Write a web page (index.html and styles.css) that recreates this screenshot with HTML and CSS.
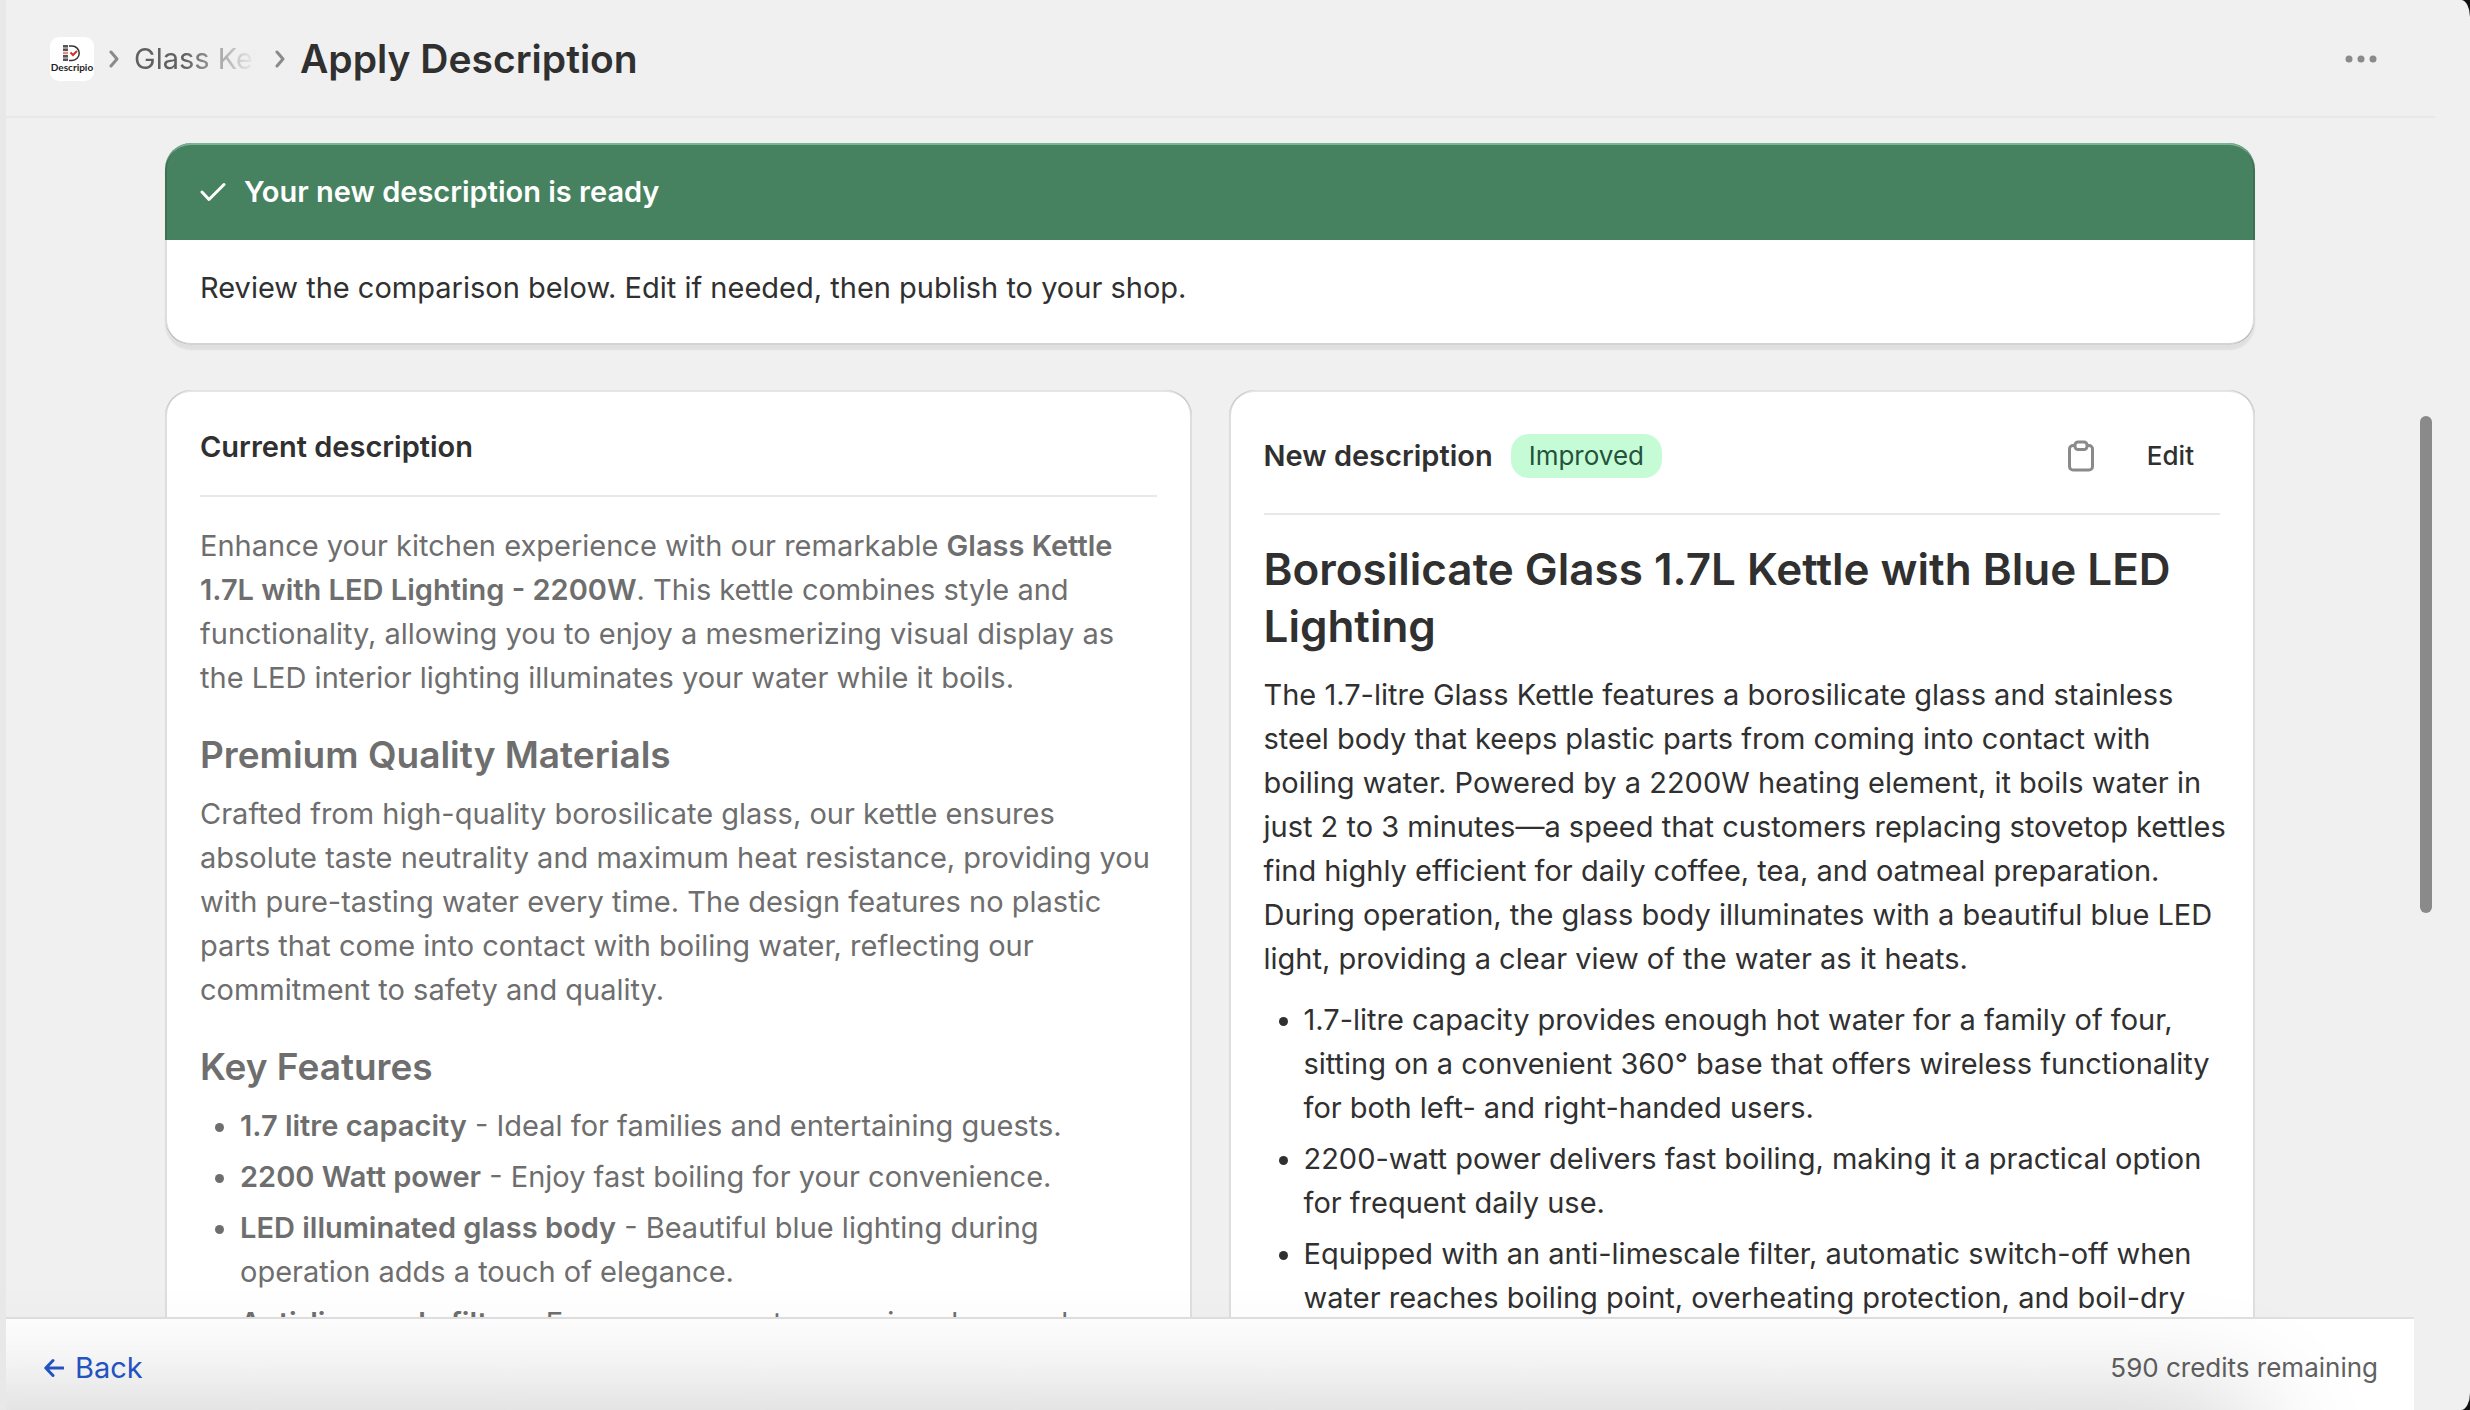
FILE: index.html
```html
<!DOCTYPE html>
<html lang="en">
<head>
  <meta charset="UTF-8">
  <title>Apply Description</title>
  <link rel="stylesheet" href="styles.css">
</head>
<body>
  <div class="app">
    <header class="topbar">
      <nav class="breadcrumbs">
        <a class="logo" href="#" aria-label="Descripio">
          <svg viewBox="0 0 44 44" width="44" height="44">
            <path d="M13 9h5M13 13h5M13 19h5M13 23h5" stroke="#555" stroke-width="2"/>
            <path d="M13 11h5M13 21h5" stroke="#999" stroke-width="2"/>
            <path d="M13 16h5" stroke="#e88a86" stroke-width="2.500"/>
            <path d="M19 9h3a7.200 7.200 0 0 1 0 14.400h-3" fill="none" stroke="#333" stroke-width="1.500"/>
            <path d="M20.500 15.500l2.500 2.500 4-4" fill="none" stroke="#d0312d" stroke-width="2"/>
            <text x="22" y="34" text-anchor="middle" class="logo-text">Descripio</text>
          </svg>
        </a>
        <svg class="chevron" viewBox="0 0 10 18" width="10" height="18"><path d="M2 2l6 7-6 7"/></svg>
        <a class="crumb" href="#">Glass Kettle</a>
        <svg class="chevron" viewBox="0 0 10 18" width="10" height="18"><path d="M2 2l6 7-6 7"/></svg>
        <h1>Apply Description</h1>
      </nav>
      <button class="icon-btn" aria-label="More actions">
        <svg viewBox="0 0 32 8" width="32" height="8" fill="#8a8a8a"><circle cx="4" cy="4" r="3.500"/><circle cx="16" cy="4" r="3.500"/><circle cx="28" cy="4" r="3.500"/></svg>
      </button>
    </header>

    <main class="content">
      <section class="banner">
        <div class="banner-title">
          <svg viewBox="0 0 26 20" width="26" height="20"><path d="M2 10l7 7.500L24 2.500"/></svg>
          <h2>Your new description is ready</h2>
        </div>
        <p>Review the comparison below. Edit if needed, then publish to your shop.</p>
      </section>

      <div class="compare">
        <section class="card">
          <div class="card-head">
            <h2>Current description</h2>
          </div>
          <div class="description muted">
            <p>Enhance your kitchen experience with our remarkable <strong>Glass Kettle 1.7L with LED Lighting - 2200W</strong>. This kettle combines style and functionality, allowing you to enjoy a mesmerizing visual display as the LED interior lighting illuminates your water while it boils.</p>
            <h3>Premium Quality Materials</h3>
            <p>Crafted from high-quality borosilicate glass, our kettle ensures absolute taste neutrality and maximum heat resistance, providing you with pure-tasting water every time. The design features no plastic parts that come into contact with boiling water, reflecting our commitment to safety and quality.</p>
            <h3>Key Features</h3>
            <ul>
              <li><strong>1.7 litre capacity</strong> - Ideal for families and entertaining guests.</li>
              <li><strong>2200 Watt power</strong> - Enjoy fast boiling for your convenience.</li>
              <li><strong>LED illuminated glass body</strong> - Beautiful blue lighting during operation adds a touch of elegance.</li>
              <li><strong>Anti-limescale filter</strong> - Ensures your water remains clean and great-tasting.</li>
            </ul>
          </div>
        </section>

        <section class="card">
          <div class="card-head">
            <h2>New description</h2>
            <span class="badge">Improved</span>
            <div class="card-actions">
              <button class="icon-btn" aria-label="Copy">
                <svg viewBox="0 0 28 32" width="28" height="32" fill="none" stroke="#8a8a8a" stroke-width="3"><path d="M8 5.500H6a3.500 3.500 0 0 0-3.500 3.500v17.500a3.500 3.500 0 0 0 3.500 3.500h16a3.500 3.500 0 0 0 3.500-3.500V9a3.500 3.500 0 0 0-3.500-3.500h-2"/><rect x="8" y="2" width="12" height="7.500" rx="3"/></svg>
              </button>
              <button class="edit-btn">Edit</button>
            </div>
          </div>
          <div class="description new">
            <h2>Borosilicate Glass 1.7L Kettle with Blue LED Lighting</h2>
            <p>The 1.7-litre Glass Kettle features a borosilicate glass and stainless steel body that keeps plastic parts from coming into contact with boiling water. Powered by a 2200W heating element, it boils water in just 2 to 3 minutes—a speed that customers replacing stovetop kettles find highly efficient for daily coffee, tea, and oatmeal preparation. During operation, the glass body illuminates with a beautiful blue LED light, providing a clear view of the water as it heats.</p>
            <ul>
              <li>1.7-litre capacity provides enough hot water for a family of four, sitting on a convenient 360° base that offers wireless functionality for both left- and right-handed users.</li>
              <li>2200-watt power delivers fast boiling, making it a practical option for frequent daily use.</li>
              <li>Equipped with an anti-limescale filter, automatic switch-off when water reaches boiling point, overheating protection, and boil-dry protection.</li>
            </ul>
          </div>
        </section>
      </div>
    </main>

    <footer class="footer">
      <a class="back" href="#">
        <svg viewBox="0 0 20 20" width="20" height="20"><path d="M19 10H2M9 2.500L1.800 10 9 17.500"/></svg>
        Back
      </a>
      <span class="credits">590 credits remaining</span>
    </footer>
    <div class="scroll-thumb"></div>
  </div>
</body>
</html>
```
FILE: styles.css
```css
* {
  box-sizing: border-box;
}

html {
  background: #111;
}

body {
  margin: 0;
  font-family: Inter, "Liberation Sans", sans-serif;
  font-size: 29px;
  line-height: 44px;
  color: #303030;
}

h1, h2, h3, p, ul {
  margin: 0;
}

button {
  font: inherit;
  color: inherit;
  background: none;
  border: none;
  padding: 0;
  cursor: pointer;
}

svg {
  display: block;
  flex-shrink: 0;
}

.app {
  position: relative;
  display: flex;
  flex-direction: column;
  height: 100vh;
  overflow: hidden;
  background: #f0f0f0;
  border-left: 6px solid #e8e8e8;
  border-radius: 0 9px 9px 0 / 0 17px 17px 0;
}

/* soft shade along the bottom edge */
.app::after {
  content: "";
  position: absolute;
  top: 100%;
  left: -200px;
  right: 220px;
  height: 100px;
  box-shadow: 0 0 120px rgba(0, 0, 0, 0.23);
  pointer-events: none;
}

/* top bar */
.topbar {
  display: flex;
  align-items: center;
  justify-content: space-between;
  flex-shrink: 0;
  height: 118px;
  margin-right: 35px;
  padding: 2px 58px 0 44px;
  border-bottom: 2px solid #e8e8e8;
}

.breadcrumbs {
  display: flex;
  align-items: center;
  gap: 15px;
}

.logo {
  background: #fff;
  border-radius: 9px;
}

.logo-text {
  font-family: Lato, sans-serif;
  font-size: 10px;
  font-weight: 700;
  fill: #222;
}

.chevron {
  fill: none;
  stroke: #8a8a8a;
  stroke-width: 3;
  stroke-linecap: round;
  stroke-linejoin: round;
}

.crumb {
  width: 126px;
  overflow: hidden;
  white-space: nowrap;
  color: #616161;
  text-decoration: none;
  mask-image: linear-gradient(to right, #000 40%, transparent 97%);
}

.topbar h1 {
  font-size: 39px;
  font-weight: 600;
}

/* scrolled area */
.content {
  flex: 1;
  min-height: 0;
  overflow: hidden;
  margin-right: 56px;
  padding: 25px 159px 0;
}

.banner {
  position: relative;
  margin-bottom: 45px;
  background: #fff;
  border-radius: 26px;
  overflow: hidden;
  box-shadow: 0 5px 2px rgba(0, 0, 0, 0.07);
}

.banner::after,
.card::after {
  content: "";
  position: absolute;
  inset: 0;
  border-radius: inherit;
  pointer-events: none;
}

.banner::after {
  box-shadow: inset 2px 0 rgba(0, 0, 0, 0.13), inset -2px 0 rgba(0, 0, 0, 0.13),
    inset 0 -2px rgba(0, 0, 0, 0.17), inset 0 2px rgba(204, 255, 230, 0.4);
}

.banner-title {
  display: flex;
  align-items: center;
  gap: 18px;
  padding: 27px 35px 26px;
  background: #46825f;
  color: #fff;
}

.banner-title svg {
  fill: none;
  stroke: #fff;
  stroke-width: 3;
  stroke-linecap: round;
  stroke-linejoin: round;
}

.banner h2,
.card-head h2 {
  font-size: 29px;
  font-weight: 600;
}

.banner p {
  padding: 26px 35px 35px;
}

.compare {
  display: grid;
  grid-template-columns: 1fr 1fr;
  gap: 37px;
}

.card {
  position: relative;
  padding: 35px;
  background: #fff;
  border-radius: 26px;
}

.card::after {
  box-shadow: inset 2px 0 rgba(0, 0, 0, 0.13), inset -2px 0 rgba(0, 0, 0, 0.13),
    inset 0 -2px rgba(0, 0, 0, 0.17), inset 0 2px rgba(0, 0, 0, 0.1);
}

.card-head {
  display: flex;
  align-items: center;
  gap: 18px;
  padding-bottom: 26px;
  border-bottom: 2px solid #e8e8e8;
}

.badge {
  padding: 0 18px;
  border-radius: 18px;
  background: #c5fcd6;
  color: #24533c;
  font-size: 26px;
}

.card-actions {
  display: flex;
  align-items: center;
  gap: 26px;
  margin-left: auto;
}

.edit-btn {
  height: 62px;
  padding: 0 26px;
  font-size: 26px;
  font-weight: 550;
}

.description {
  padding-top: 27px;
}

.description.muted {
  color: #6e6e6e;
}

/* longer lines run slightly past the divider */
.description.new {
  margin-right: -12px;
  padding-top: 26px;
}

.description strong {
  font-weight: 600;
}

.description h2 {
  margin-bottom: 18px;
  font-size: 44px;
  line-height: 57px;
  font-weight: 620;
}

.description h3 {
  margin: 31px 0 13px;
  font-size: 37px;
  line-height: 48px;
  font-weight: 620;
}

.description ul {
  padding-left: 40px;
}

.description p + ul {
  margin-top: 17px;
}

.description li + li {
  margin-top: 7px;
}

/* bottom bar */
.footer {
  display: flex;
  justify-content: space-between;
  flex-shrink: 0;
  margin-right: 56px;
  padding: 27px 36px 20px 38px;
  background: #fff;
  border-top: 2px solid #e0e0e0;
}

.back {
  display: flex;
  align-items: center;
  gap: 11px;
  color: #2458cc;
  text-decoration: none;
}

.back svg {
  fill: none;
  stroke: currentColor;
  stroke-width: 3;
  stroke-linecap: round;
  stroke-linejoin: round;
}

.credits {
  font-size: 26px;
  color: #616161;
}

.scroll-thumb {
  position: absolute;
  top: 416px;
  right: 38px;
  width: 12px;
  height: 497px;
  border-radius: 6px;
  background: #8a8a8a;
}
```
